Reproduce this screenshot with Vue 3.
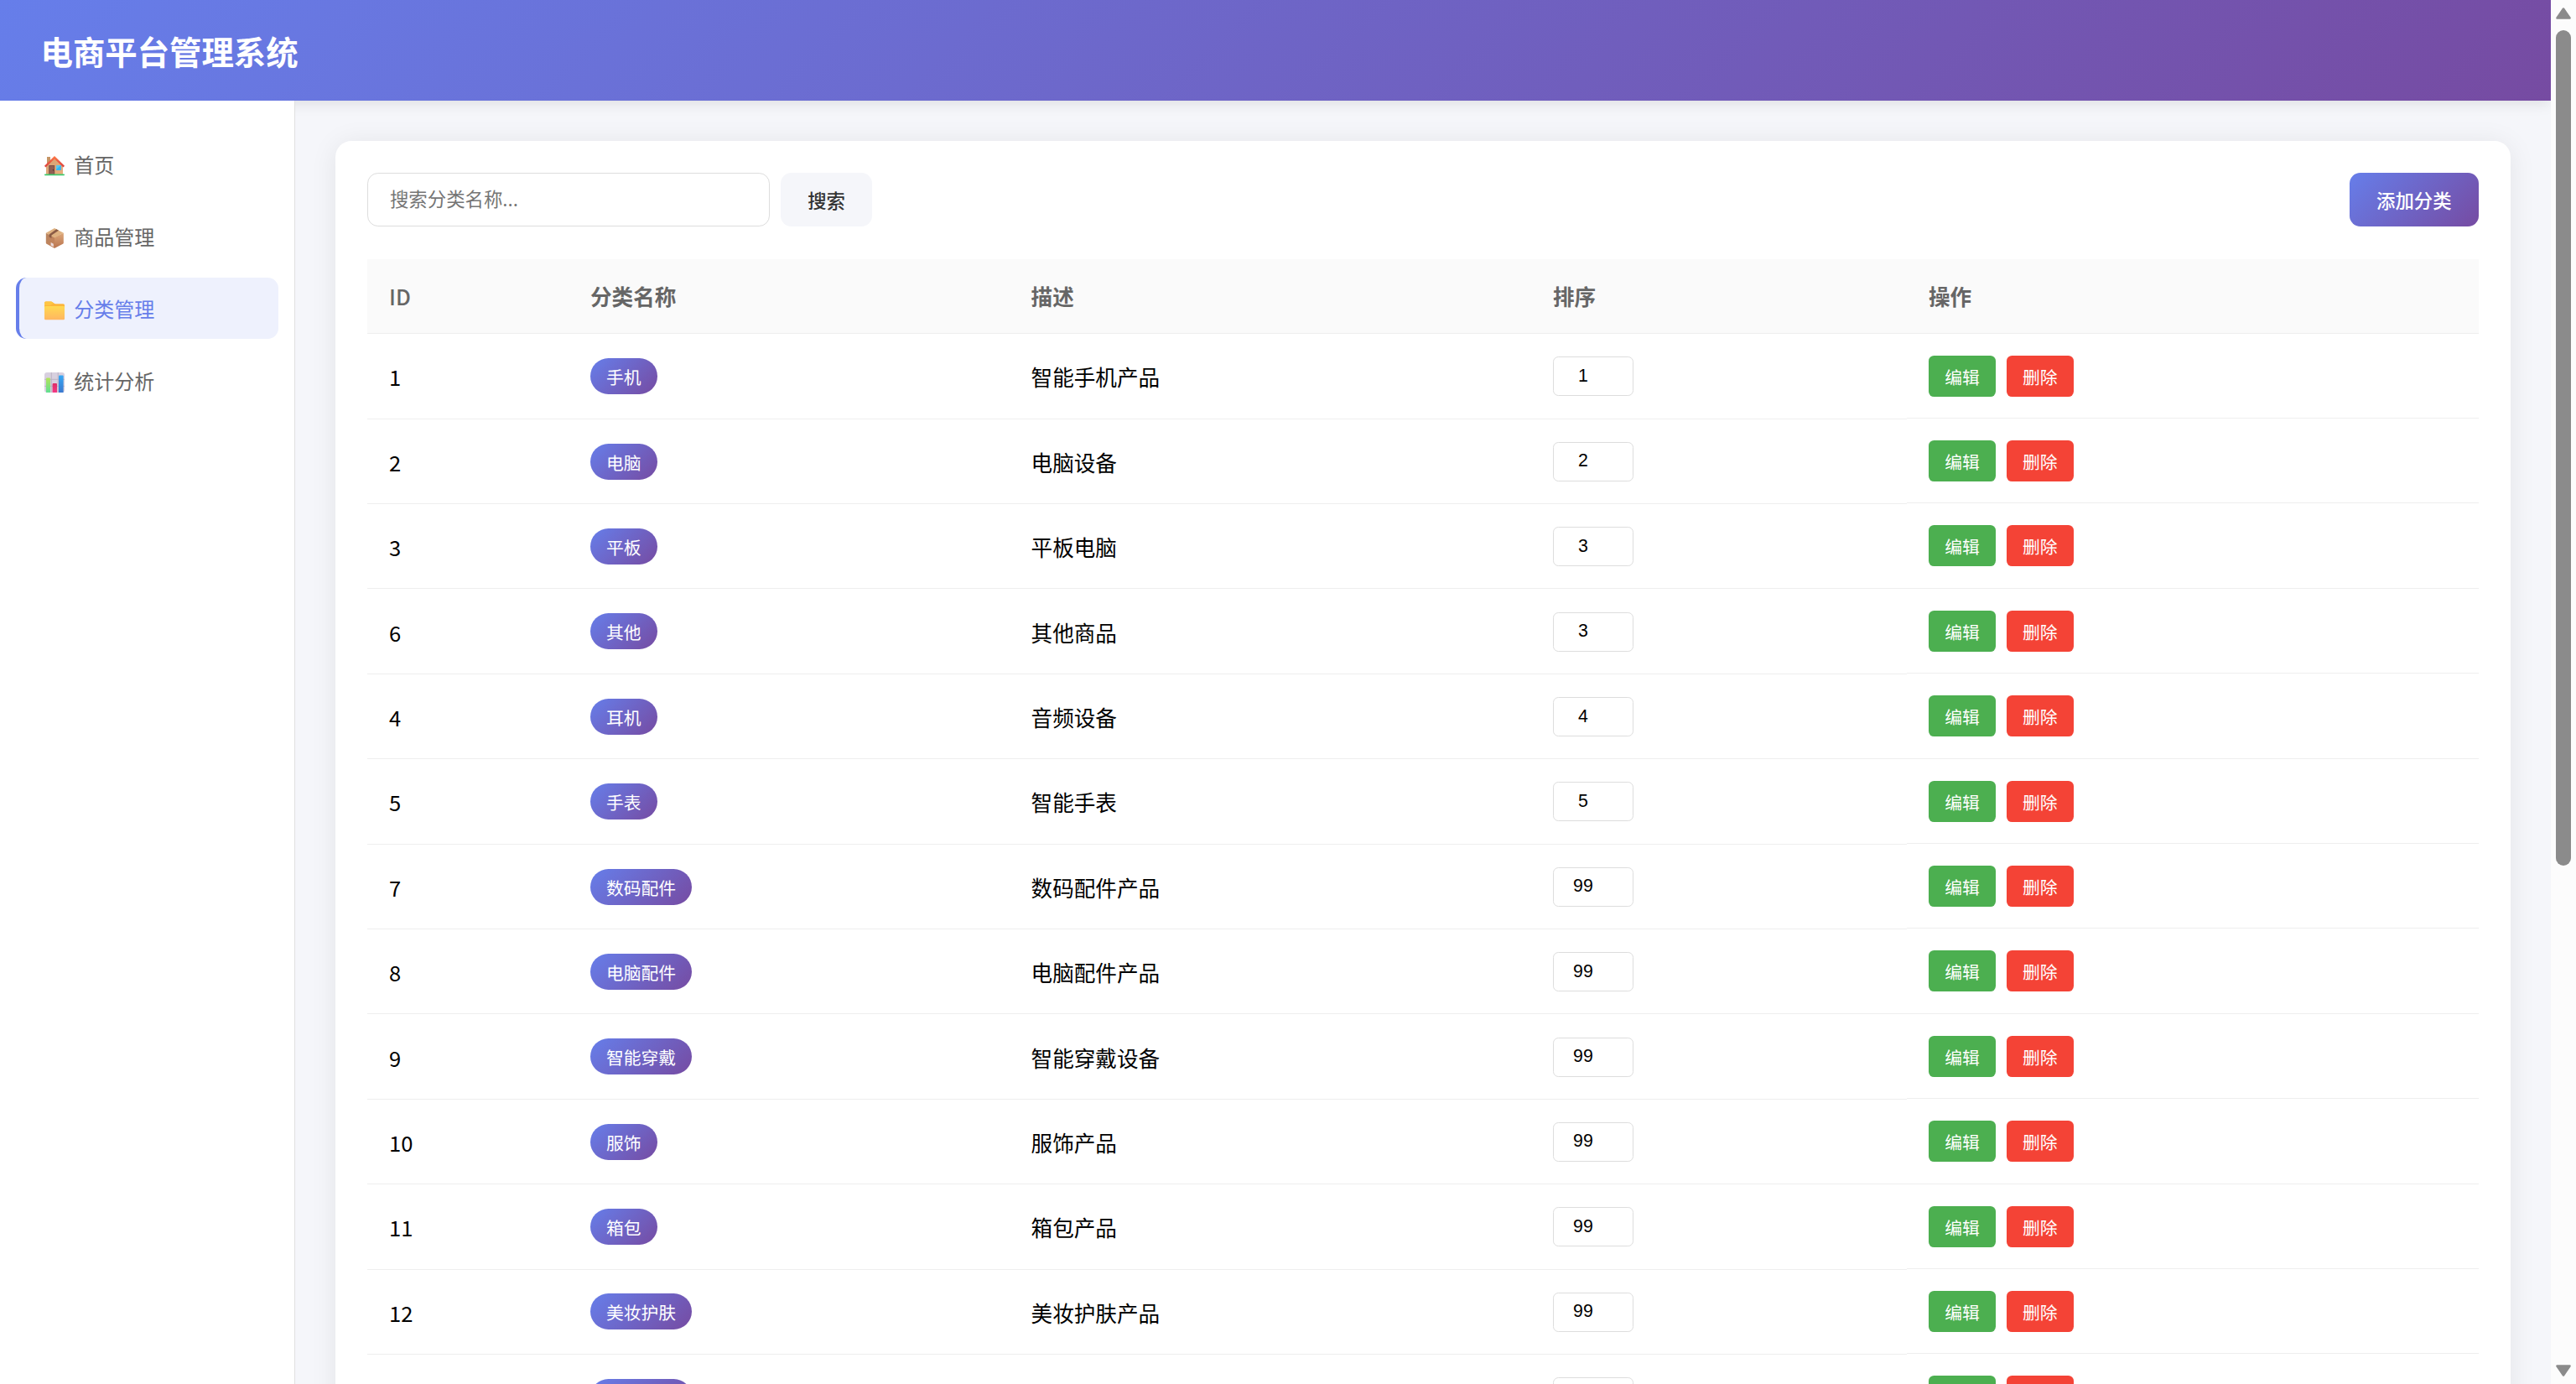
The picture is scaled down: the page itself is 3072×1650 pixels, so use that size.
<script setup>
const menu = [
  { icon: 'home', label: '首页' },
  { icon: 'box', label: '商品管理' },
  { icon: 'folder', label: '分类管理', active: true },
  { icon: 'chart', label: '统计分析' },
]
const columns = ['ID', '分类名称', '描述', '排序', '操作']
const categories = [
  { id: 1, name: '手机', desc: '智能手机产品', sort: 1 },
  { id: 2, name: '电脑', desc: '电脑设备', sort: 2 },
  { id: 3, name: '平板', desc: '平板电脑', sort: 3 },
  { id: 6, name: '其他', desc: '其他商品', sort: 3 },
  { id: 4, name: '耳机', desc: '音频设备', sort: 4 },
  { id: 5, name: '手表', desc: '智能手表', sort: 5 },
  { id: 7, name: '数码配件', desc: '数码配件产品', sort: 99 },
  { id: 8, name: '电脑配件', desc: '电脑配件产品', sort: 99 },
  { id: 9, name: '智能穿戴', desc: '智能穿戴设备', sort: 99 },
  { id: 10, name: '服饰', desc: '服饰产品', sort: 99 },
  { id: 11, name: '箱包', desc: '箱包产品', sort: 99 },
  { id: 12, name: '美妆护肤', desc: '美妆护肤产品', sort: 99 },
  { id: 13, name: '家居用品', desc: '家居用品产品', sort: 99 },
]
</script>

<template>
  <div class="window">
    <div class="page">
      <header class="header"><h1>电商平台管理系统</h1></header>
      <div class="body">
        <nav class="sidebar">
          <a v-for="m in menu" :key="m.label" class="item" :class="{ active: m.active }">
            <svg v-if="m.icon === 'home'" class="icon" viewBox="0 0 24 24">
              <defs>
                <linearGradient id="wall" x1="0" y1="0" x2="1" y2="1">
                  <stop offset="0" stop-color="#d5a173" /><stop offset="1" stop-color="#e8ae7c" />
                </linearGradient>
                <linearGradient id="roof" x1="0" y1="0" x2="0" y2="1">
                  <stop offset="0" stop-color="#ff7a45" /><stop offset="1" stop-color="#d83a3e" />
                </linearGradient>
              </defs>
              <rect x="3" y="1" width="4" height="9" fill="#c69565" />
              <path d="M12 2 22 11.5V22H2V11.5Z" fill="url(#wall)" />
              <path d="M12 0 24 11.8 22.6 13.6 12 3.6 1.4 13.6 0 11.8Z" fill="url(#roof)" />
              <rect x="5.2" y="11" width="7" height="11" rx=".6" fill="#7e5148" />
              <rect x="6.2" y="12" width="5" height="10" fill="#905f53" />
              <circle cx="10.4" cy="16.8" r=".7" fill="#4e2d2b" />
              <rect x="14" y="11" width="5.8" height="6" rx=".5" fill="#32b5f5" />
              <path d="M14 11h5.8L14 16Z" fill="#5bc8ef" />
              <rect x="0" y="21.6" width="24" height="1.7" rx=".8" fill="#3fcb70" />
            </svg>
            <svg v-else-if="m.icon === 'box'" class="icon" viewBox="0 0 24 24">
              <defs>
                <linearGradient id="side" x1="0" y1="0" x2="1" y2="1">
                  <stop offset="0" stop-color="#b98560" /><stop offset="1" stop-color="#c4825a" />
                </linearGradient>
                <linearGradient id="face" x1="0" y1="0" x2="0" y2="1">
                  <stop offset="0" stop-color="#dca678" /><stop offset="1" stop-color="#b9744f" />
                </linearGradient>
              </defs>
              <path d="M1.8 5.8 12 10.8V24L2.6 18.8Q1.8 18.3 1.8 17.4Z" fill="url(#side)" />
              <path d="M22.8 5.8 12 10.8V24L22 18.8Q22.8 18.3 22.8 17.4Z" fill="url(#face)" />
              <path d="M12 0 22.8 5.8 12 11.6 1.8 5.8Z" fill="#dfb281" />
              <path d="M14.2 1.3 17 2.8 8.4 8.6V12L5.6 10.4V7.4Z" fill="#8a5b45" />
              <path d="m7.6 17 3.2 1.8v3.4l-3.2-1.8Z" fill="#ecdcdd" />
            </svg>
            <svg v-else-if="m.icon === 'folder'" class="icon" viewBox="0 0 24 24">
              <defs>
                <linearGradient id="front" x1="0" y1="0" x2="0" y2="1">
                  <stop offset="0" stop-color="#ffd950" /><stop offset="1" stop-color="#ffb661" />
                </linearGradient>
              </defs>
              <path d="M0 3Q0 1.4 1.6 1.4H7.8Q8.8 1.4 9.6 2.2L11.4 3.6Q12.2 4.2 13.2 4.2H22.4Q24 4.2 24 5.8V12H0Z" fill="#fcb63c" />
              <path d="M0 3Q0 1.4 1.6 1.4H7.8Q8.8 1.4 9.6 2.2L11 3.4 7 6H0Z" fill="#fec544" />
              <path d="M0 8.2Q0 7 1.4 7H22.8Q24 7 24 8.2V22Q24 23.2 22.8 23.2H1.2Q0 23.2 0 22Z" fill="url(#front)" />
            </svg>
            <svg v-else class="icon" viewBox="0 0 24 24">
              <defs>
                <linearGradient id="g1" x1="0" y1="0" x2="0" y2="1">
                  <stop offset="0" stop-color="#b4e35a" /><stop offset="1" stop-color="#5fdf92" />
                </linearGradient>
                <linearGradient id="g2" x1="0" y1="0" x2="0" y2="1">
                  <stop offset="0" stop-color="#dd2d66" /><stop offset="1" stop-color="#f43a85" />
                </linearGradient>
                <linearGradient id="g3" x1="0" y1="0" x2="0" y2="1">
                  <stop offset="0" stop-color="#35a8f5" /><stop offset="1" stop-color="#3b78cf" />
                </linearGradient>
              </defs>
              <rect x="0" y="0" width="24" height="24" rx="3" fill="#d8d0df" />
              <path d="M8.3 0V24M16.2 0V24M0 8.3H24M0 16.4H24" stroke="#b9b0c2" stroke-width=".9" />
              <path d="M2 24V7.5Q2 6.5 3 6.5H6Q7 6.5 7 7.5V24Z" fill="url(#g1)" />
              <path d="M9.6 24V14Q9.6 13 10.6 13H14Q15 13 15 14V24Z" fill="url(#g2)" />
              <path d="M17 24V4.4Q17 3.4 18 3.4H21.6Q22.6 3.4 22.6 4.4V24Z" fill="url(#g3)" />
            </svg>
            <span>{{ m.label }}</span>
          </a>
        </nav>
        <main class="main">
          <section class="card">
            <div class="toolbar">
              <input class="search" placeholder="搜索分类名称..." />
              <button class="btn">搜索</button>
              <button class="btn primary">添加分类</button>
            </div>
            <div class="row head">
              <div v-for="c in columns" :key="c" class="cell">{{ c }}</div>
            </div>
            <div v-for="c in categories" :key="c.id" class="row">
              <div class="cell">{{ c.id }}</div>
              <div class="cell"><span class="badge">{{ c.name }}</span></div>
              <div class="cell">{{ c.desc }}</div>
              <div class="cell"><input class="sort" :value="c.sort" /></div>
              <div class="cell ops">
                <button class="op edit">编辑</button>
                <button class="op del">删除</button>
              </div>
            </div>
          </section>
        </main>
      </div>
    </div>
    <div class="scrollbar">
      <svg class="arrow" viewBox="0 0 18 14"><path d="M9 1.5 16.5 12.5H1.5Z" /></svg>
      <div class="thumb"></div>
      <svg class="arrow" viewBox="0 0 18 14"><path d="M9 12.5 1.5 1.5H16.5Z" /></svg>
    </div>
  </div>
</template>

<style>
body {
  margin: 0;
  overflow: hidden;
}
</style>

<style scoped>
* {
  box-sizing: border-box;
}
.window {
  display: flex;
  width: 3072px;
  height: 1650px;
  overflow: hidden;
  font-family: "Noto Sans CJK SC", sans-serif;
  font-size: 25.6px;
  color: #000;
}
.page {
  width: 3042px;
  display: flex;
  flex-direction: column;
  background: #f5f6fa;
  overflow: hidden;
}
.header {
  flex: none;
  height: 120px;
  padding: 0 48.5px;
  display: flex;
  align-items: center;
  background: linear-gradient(135deg, #667eea 0%, #764ba2 100%);
  box-shadow: 0 3.2px 16px rgba(0, 0, 0, 0.1);
}
h1 {
  margin: 0;
  font-size: 38.4px;
  font-weight: 700;
  color: #fff;
}
.body {
  flex: 1;
  min-height: 0;
  display: flex;
}
.sidebar {
  position: relative;
  flex: none;
  width: 352px;
  padding: 39.2px 19.2px 0;
  background: #fff;
  border-right: 1px solid #e0e0e0;
}
.item {
  height: 73px;
  margin-bottom: 13px;
  padding-left: 29.8px;
  border-left: 4px solid transparent;
  border-radius: 12.8px;
  display: flex;
  align-items: center;
  gap: 11.2px;
  font-size: 24px;
  color: #666;
}
.item.active {
  background: #eef1fd;
  border-left-color: #667eea;
  color: #667eea;
}
.icon {
  width: 24px;
  height: 24px;
  margin-top: 4px;
}
.item span {
  margin-top: -1px;
}
.main {
  flex: 1;
  padding: 48px;
}
.card {
  height: 1800px;
  padding: 38.4px;
  background: #fff;
  border-radius: 19.2px;
  box-shadow: 0 3.2px 32px rgba(0, 0, 0, 0.08);
}
.toolbar {
  display: flex;
  height: 64px;
  margin-bottom: 38.4px;
  gap: 12.8px;
}
input,
button {
  font-family: inherit;
  margin: 0;
  outline: none;
}
.search {
  width: 480px;
  padding: 0 25.6px 5px;
  border: 1px solid #ddd;
  border-radius: 12.8px;
  font-size: 22.4px;
}
.search::placeholder {
  color: #757575;
}
.btn {
  padding: 0 32px;
  border: 0;
  border-radius: 12.8px;
  font-size: 22.4px;
  font-weight: 500;
  background: #f5f6fa;
  color: #333;
}
.primary {
  margin-left: auto;
  background: linear-gradient(135deg, #667eea 0%, #764ba2 100%);
  color: #fff;
}
.row {
  display: grid;
  grid-template-columns: 240px 525.6px 622.4px 448px 1fr;
  height: 101.4px;
}
.cell {
  display: flex;
  align-items: center;
  padding: 1px 25.6px 0;
  border-bottom: 1px solid #eee;
}
.head {
  height: 89.5px;
  background: #fafafa;
  font-weight: 600;
  color: #666;
}
.head .cell {
  padding: 0 25.6px 1px;
}
.head .cell:first-child {
  font-weight: 500;
}
.badge {
  height: 43px;
  margin-top: -0.6px;
  padding: 2px 19px 0;
  border-radius: 32px;
  background: linear-gradient(135deg, #667eea 0%, #764ba2 100%);
  color: #fff;
  font-size: 20.8px;
  line-height: 41px;
}
.sort {
  width: 96px;
  height: 47px;
  margin-top: 0;
  padding: 0 24px 1px 0;
  border: 1px solid #ddd;
  border-radius: 6.4px;
  font-family: "Liberation Sans", sans-serif;
  font-size: 21.33px;
  text-align: center;
}
.ops {
  gap: 12.8px;
}
.row:not(.head) .ops {
  height: 100.8px;
}
.op {
  height: 49px;
  margin-top: -1px;
  padding: 1px 19.2px 0;
  border: 0;
  border-radius: 6.4px;
  color: #fff;
  font-size: 20.8px;
}
.edit {
  background: #4caf50;
}
.del {
  background: #f44336;
}
.scrollbar {
  width: 30px;
  height: 1650px;
  padding: 9px 0;
  display: flex;
  flex-direction: column;
  align-items: center;
  background: #fcfcfc;
}
.arrow {
  width: 18px;
  height: 14px;
  fill: #8b8b8b;
  stroke: #8b8b8b;
  stroke-width: 2.6;
  stroke-linejoin: round;
}
.thumb {
  width: 18px;
  height: 996px;
  margin: 13px 0 auto;
  border-radius: 9px;
  background: #8b8b8b;
}
</style>
